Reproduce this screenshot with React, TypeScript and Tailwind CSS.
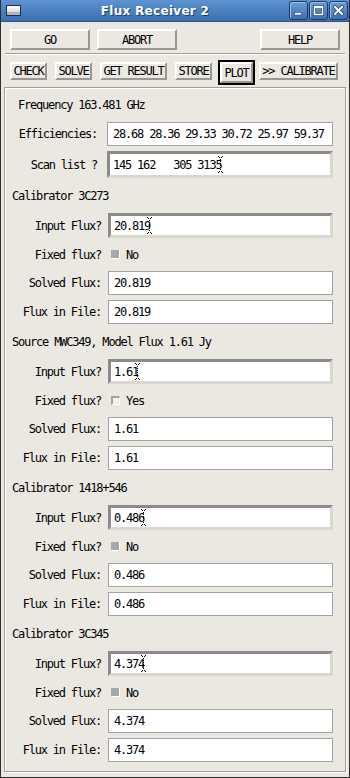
import React from 'react';

const mono = "font-['DejaVu_Sans_Mono','Liberation_Mono',monospace] text-[12px] tracking-[-1.2px] leading-none text-black";

const sections = [
  { title: 'Calibrator 3C273', input: '20.819', fixed: false, solved: '20.819', file: '20.819' },
  { title: 'Source MWC349, Model Flux 1.61 Jy', input: '1.61', fixed: true, solved: '1.61', file: '1.61' },
  { title: 'Calibrator 1418+546', input: '0.486', fixed: false, solved: '0.486', file: '0.486' },
  { title: 'Calibrator 3C345', input: '4.374', fixed: false, solved: '4.374', file: '4.374' },
];

function TkButton({ label, className = '' }: { label: string; className?: string }) {
  return (
    <div className={`flex items-center justify-center whitespace-pre border-2 border-t-white border-l-white border-r-[#9a9791] border-b-[#9a9791] bg-[#ebe8e2] ${className}`}>
      {label}
    </div>
  );
}

function IBeam() {
  return (
    <svg width="5" height="18" viewBox="0 0 5 18" className="-ml-[3px] shrink-0">
      <g fill="#000">
        <rect x="0" y="0" width="1" height="1" />
        <rect x="4" y="0" width="1" height="1" />
        <rect x="1" y="1" width="1" height="1" />
        <rect x="3" y="1" width="1" height="1" />
        <rect x="2" y="3" width="1" height="1" />
        <rect x="2" y="5" width="1" height="1" />
        <rect x="2" y="7" width="1" height="1" />
        <rect x="2" y="9" width="1" height="1" />
        <rect x="2" y="11" width="1" height="1" />
        <rect x="2" y="13" width="1" height="1" />
        <rect x="1" y="15" width="1" height="1" />
        <rect x="3" y="15" width="1" height="1" />
        <rect x="0" y="16" width="1" height="1" />
        <rect x="4" y="16" width="1" height="1" />
      </g>
    </svg>
  );
}

function Entry({ value, sunken = false, className = '' }: { value: string; sunken?: boolean; className?: string }) {
  return (
    <div
      className={`flex items-center bg-white ${
        sunken
          ? 'border-[3px] border-t-[#8b8b8b] border-l-[#8b8b8b] border-b-[#dad7d1] border-r-[#dad7d1] pl-[3px]'
          : 'border border-[#a3a3a3] pl-[5px]'
      } ${className}`}>
      <span className="whitespace-pre">{value}</span>
      {sunken && <IBeam />}
    </div>
  );
}

function Check({ on }: { on: boolean }) {
  return on ? (
    <div className="w-[9px] h-[9px] border-t-2 border-l-2 border-b border-r border-t-[#a3a3a3] border-l-[#a3a3a3] border-b-white border-r-white bg-[#f1f0ee]" />
  ) : (
    <div className="w-[9px] h-[9px] border-b border-r border-b-white border-r-white bg-[#a9a8a6]" />
  );
}

function TitleBtn({ children }: { children: React.ReactNode }) {
  return (
    <div className="w-[19px] h-[19px] rounded-[3px] border border-[#1d3a66] bg-linear-to-b from-[#6d9cd4] to-[#3d70b1] shadow-[inset_1px_1px_0_#9cc0ea] flex items-center justify-center">
      {children}
    </div>
  );
}

function Section({ s }: { s: (typeof sections)[number] }) {
  return (
    <div className="flex flex-col pb-[7px]">
      <div className="h-[21px] flex items-center pl-[7px] whitespace-pre">{s.title}</div>
      <div className="flex items-center mt-[7px] h-[25px]">
        <div className="w-[96px] text-right">Input Flux?</div>
        <Entry value={s.input} sunken className="ml-[7px] w-[225px] h-[25px]" />
      </div>
      <div className="flex items-center h-[33px]">
        <div className="w-[96px] text-right">Fixed flux?</div>
        <div className="ml-[10px] flex items-center gap-[6px]">
          <Check on={s.fixed} />
          <span>{s.fixed ? 'Yes' : 'No'}</span>
        </div>
      </div>
      <div className="flex items-center h-[24px]">
        <div className="w-[96px] text-right">Solved Flux:</div>
        <Entry value={s.solved} className="ml-[7px] w-[225px] h-[24px]" />
      </div>
      <div className="flex items-center mt-[5px] h-[24px]">
        <div className="w-[96px] text-right">Flux in File:</div>
        <Entry value={s.file} className="ml-[7px] w-[225px] h-[24px]" />
      </div>
    </div>
  );
}

export default function App() {
  return (
    <div className={`w-[350px] h-[778px] bg-[#ebe8e2] border-x border-b border-[#2e2e2e] flex flex-col overflow-hidden ${mono}`}>
      {/* title bar */}
      <div className="h-[22px] shrink-0 -mx-px flex items-center bg-linear-to-b from-[#5e93d0] to-[#3a6fb1] border-b border-[#2b5590]">
        <div className="ml-[6px] w-[15px] h-[11px] border border-[#1f2d40] bg-linear-to-b from-white to-[#c4c7cc] shadow-[inset_0_-3px_0_#b0b4ba]" />
        <div className="flex-1 text-center font-['DejaVu_Sans',sans-serif] font-bold text-[12px] tracking-[0.3px] text-white [text-shadow:1px_1px_0_#23436b]">
          Flux Receiver 2
        </div>
        <div className="flex gap-px mr-[2px]">
          <TitleBtn>
            <svg width="11" height="11" viewBox="0 0 11 11">
              <rect x="1.5" y="7.5" width="7" height="2.5" fill="white" stroke="#24497a" strokeWidth="0.6" />
            </svg>
          </TitleBtn>
          <TitleBtn>
            <svg width="11" height="11" viewBox="0 0 11 11">
              <rect x="1.5" y="1.5" width="8" height="8" fill="none" stroke="#24497a" strokeWidth="3" />
              <rect x="1.5" y="1.5" width="8" height="8" fill="none" stroke="white" strokeWidth="1.5" />
              <rect x="1" y="1" width="9" height="2" fill="white" />
            </svg>
          </TitleBtn>
          <TitleBtn>
            <svg width="11" height="11" viewBox="0 0 11 11">
              <path d="M2 2L9 9M9 2L2 9" stroke="#24497a" strokeWidth="3.6" strokeLinecap="square" />
              <path d="M2 2L9 9M9 2L2 9" stroke="white" strokeWidth="2" strokeLinecap="square" />
            </svg>
          </TitleBtn>
        </div>
      </div>

      {/* top buttons */}
      <div className="flex mt-[7px] pl-[9px] pr-[9px]">
        <TkButton label="GO" className="w-[80px] h-[21px]" />
        <TkButton label="ABORT" className="ml-[7px] w-[80px] h-[21px]" />
        <TkButton label="HELP" className="ml-auto w-[80px] h-[21px]" />
      </div>
      <div className="mt-[3px] ml-[4px] w-[340px] h-[2px] border-t border-t-[#a19e98] border-b border-b-white" />

      {/* action buttons */}
      <div className="flex items-start mt-[5px] h-[25px] pl-[9px]">
        <TkButton label="CHECK" className="mt-[2px] w-[37px] h-[18px]" />
        <TkButton label="SOLVE" className="mt-[2px] ml-[8px] w-[37px] h-[18px]" />
        <TkButton label="GET RESULT" className="mt-[2px] ml-[8px] w-[67px] h-[18px]" />
        <TkButton label="STORE" className="mt-[2px] ml-[8px] w-[37px] h-[18px]" />
        <div className="ml-[6px] w-[37px] h-[25px] border-2 border-black">
          <TkButton label="PLOT" className="w-full h-full" />
        </div>
        <TkButton label=">> CALIBRATE" className="mt-[2px] ml-[4px] w-[79px] h-[18px]" />
      </div>

      {/* main frame */}
      <div className="mt-[2px] ml-[3px] w-[342px] h-[685px] shrink-0 border border-[#a19e98] shadow-[inset_1px_1px_0_white,1px_1px_0_white] flex flex-col pt-[7px]">
        <div className="h-[20px] flex items-center pl-[13px] whitespace-pre">Frequency 163.481 GHz</div>
        <div className="flex items-center mt-[7px] h-[24px]">
          <div className="w-[92px] text-right">Efficiencies:</div>
          <Entry value="28.68 28.36 29.33 30.72 25.97 59.37" className="ml-[10px] w-[226px] h-[24px]" />
        </div>
        <div className="flex items-center mt-[5px] h-[27px]">
          <div className="w-[92px] text-right">Scan list ?</div>
          <Entry value="145 162   305 3135" sunken className="ml-[10px] w-[226px] h-[27px]" />
        </div>
        <div className="h-[7px]" />
        {sections.map((s) => (
          <Section key={s.title} s={s} />
        ))}
      </div>
    </div>
  );
}
